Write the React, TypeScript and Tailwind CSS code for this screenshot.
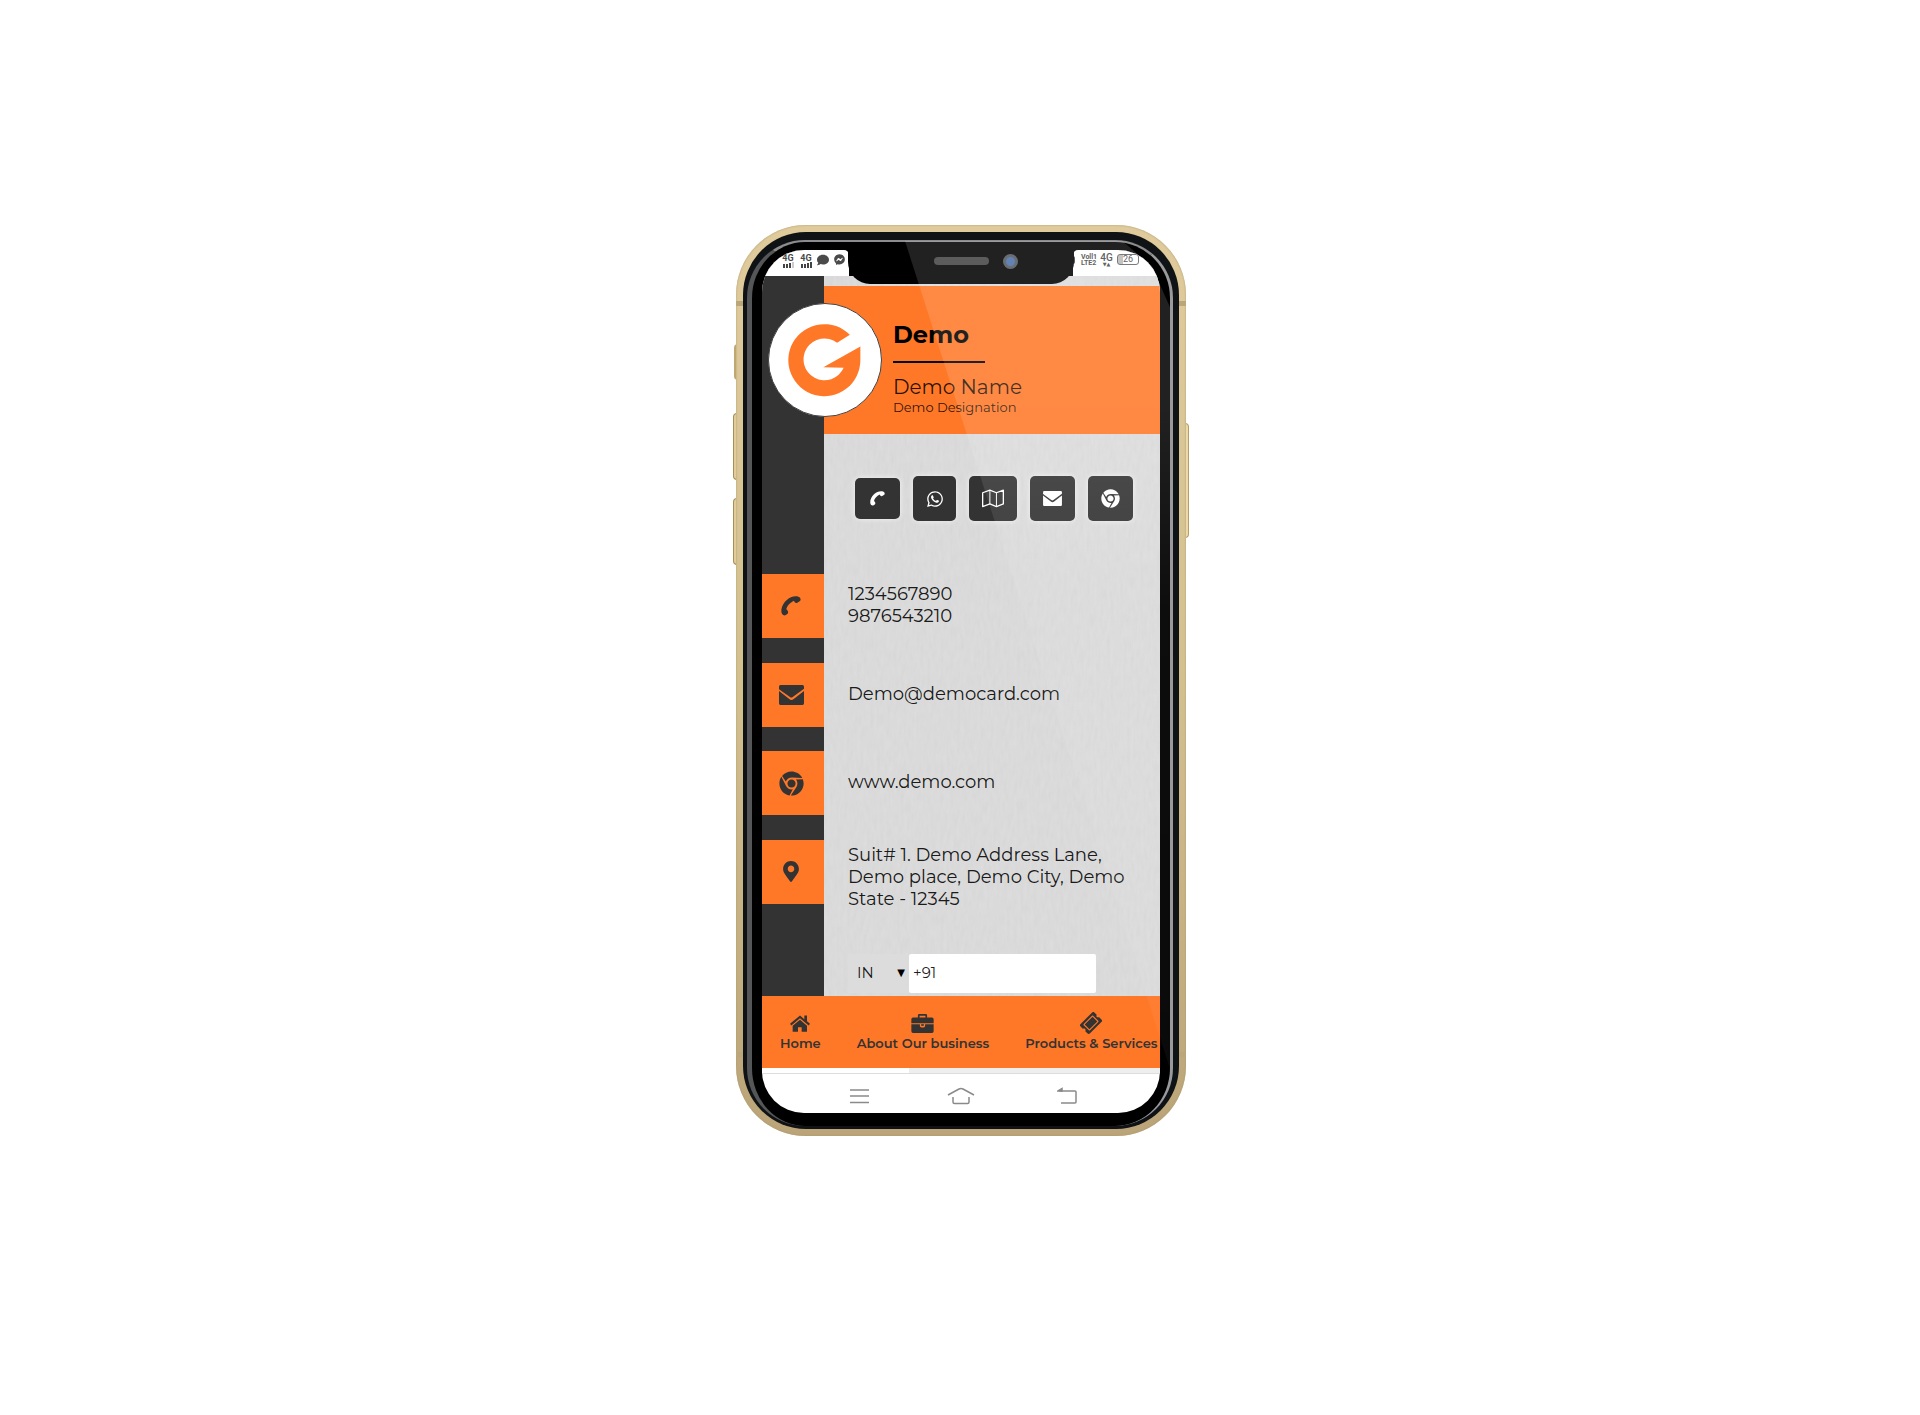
import type { ReactNode } from "react";
import { FaChrome, FaComment, FaFacebookMessenger, FaMapMarkerAlt, FaTicketAlt, FaWhatsapp } from "react-icons/fa";

type IconProps = { className?: string };

const PhoneIcon = ({ className }: IconProps) => (
  <svg viewBox="0 0 58 60" className={className} fill="currentColor" aria-hidden="true">
    <path d="M57 7C52-1 38 0 29 4 12 12 0 28 0 46c0 8 6 14 12 12l6-4c4-4 3-9-3-14 1-9 11-21 23-26 2 6 6 8 10 6l8-5q3-3 1-8Z" />
  </svg>
);

const MailIcon = ({ className }: IconProps) => (
  <svg viewBox="0 0 73 58" className={className} fill="currentColor" aria-hidden="true">
    <path d="M4 0h65q4 0 4 5v6L40 35q-4 3-8 0L0 12V5q0-5 4-5Z" />
    <path d="M0 17l30 24q6 5 13 0l30-24v36q0 5-4 5H4q-4 0-4-5Z" />
  </svg>
);

const MapIcon = ({ className }: IconProps) => (
  <svg viewBox="0 0 67 57" className={className} fill="none" stroke="currentColor" strokeWidth="4" strokeLinejoin="round" aria-hidden="true">
    <path d="M2 11 24 3l20 8 21-8v42l-21 8-20-8-22 8Z" />
    <path d="M24 3v42M44 11v42" strokeWidth="3" />
  </svg>
);

const HomeIcon = ({ className }: IconProps) => (
  <svg viewBox="0 0 60 50" className={className} fill="currentColor" aria-hidden="true">
    <path d="M30 1 0 26l4 5L30 9l26 22 4-5-9-8V1h-8v11Z" />
    <path d="M30 14 8 32v18h16V36h11v14h16V32Z" />
  </svg>
);

const BriefcaseIcon = ({ className }: IconProps) => (
  <svg viewBox="0 0 68 58" className={className} fill="currentColor" aria-hidden="true">
    <path d="M24 0h20q4 0 4 4v7h15q5 0 5 5v12H0V16q0-5 5-5h15V4q0-4 4-4Zm1 5v6h18V5Z" fillRule="evenodd" />
    <path d="M0 31h26v5q0 5 5 5h6q5 0 5-5v-5h26v22q0 5-5 5H5q-5 0-5-5Z" />
    <path d="M30 31h8v5h-8Z" />
  </svg>
);

const Logo = () => (
  <svg viewBox="0 0 342 342" className="h-full w-full" aria-label="Company logo" role="img">
    <path fill="#ff7828" d="M247 94A110 110 0 1 0 279 172V130L166 193l62 2A64 64 0 1 1 208 118Z" />
  </svg>
);

const Signal = ({ faded = false }: { faded?: boolean }) => (
  <div className="flex w-[14px] flex-col items-center">
    <span className="text-[9px] font-bold leading-[8px]">4G</span>
    <span className="flex items-end gap-px">
      <i className="h-1 w-[2px] bg-[#444]" />
      <i className="h-1 w-[2px] bg-[#444]" />
      <i className="h-[5px] w-[2px] bg-[#444]" />
      <i className={faded ? "h-[6px] w-[2px] bg-[#ccc]" : "h-[6px] w-[2px] bg-[#444]"} />
    </span>
  </div>
);

const StatusBar = () => (
  <div className="flex h-[26px] justify-between bg-black font-['Roboto',sans-serif] text-[#4a4a4a]">
    <div className="flex w-[87px] items-start justify-end gap-1 rounded-tr-[5px] bg-white pr-1 pt-1">
      <Signal faded />
      <Signal />
      <FaComment className="h-3 w-3" />
      <FaFacebookMessenger className="ml-px h-[11px] w-[11px]" />
    </div>
    <div className="flex w-[87px] items-start rounded-tl-[5px] bg-white pt-1">
      <i className="mt-0.5 h-2 w-[2px] rounded-r bg-[#444]" />
      <span className="ml-[6px] w-4 text-[7px] font-bold leading-[6px]">Voll1<br />LTE2</span>
      <span className="ml-[3px] flex w-[13px] flex-col items-center text-[10px] font-medium leading-[8px]">
        4G<small className="font-['DejaVu_Sans'] text-[5px] leading-[4px]">▼▲</small>
      </span>
      <span className="ml-1 flex h-[11px] w-[22px] items-center justify-center rounded-[3px] border border-[#666] bg-linear-to-r from-[#bbb] from-25% to-white to-25% text-[9px] leading-[9px]">
        26
      </span>
    </div>
  </div>
);

const Paper = () => (
  <svg className="pointer-events-none absolute inset-0 h-full w-full opacity-8" aria-hidden="true">
    <filter id="paper">
      <feTurbulence type="fractalNoise" baseFrequency="0.3 0.08" numOctaves="3" seed="4" />
      <feColorMatrix type="matrix" values="0.7 0 0 0 0.4 0.7 0 0 0 0.4 0.7 0 0 0 0.4 0 0 0 0 1" />
    </filter>
    <rect width="100%" height="100%" filter="url(#paper)" />
  </svg>
);

const Tile = ({ children }: { children: ReactNode }) => (
  <div className="flex h-16 items-center bg-[#ff7828] pl-4">
    <span className="flex w-[26px] justify-center">{children}</span>
  </div>
);

const Action = ({ label, size, children }: { label: string; size: string; children: ReactNode }) => (
  <a href="#" aria-label={label} className={`flex items-center justify-center rounded-[5px] bg-[#333] text-white shadow-[0_0_5px_#f4f4f4] ${size}`}>
    {children}
  </a>
);

const Detail = ({ children, tall = false }: { children: ReactNode; tall?: boolean }) => (
  <div className={tall ? "flex h-16 items-start whitespace-nowrap pt-1" : "flex h-16 items-center whitespace-nowrap pb-[2px]"}>
    <div>{children}</div>
  </div>
);

const NavItem = ({ label, children }: { label: string; children: ReactNode }) => (
  <a href="#" className="flex shrink-0 flex-col items-center whitespace-nowrap">
    <span className="flex h-5 items-center">{children}</span>
    <span className="leading-5">{label}</span>
  </a>
);

export default function App() {
  return (
    <main className="flex min-h-screen items-start justify-center bg-white pl-[2px] pt-[225px] font-['Montserrat','Inter',sans-serif] text-black">
      <div className="relative w-[450px]">
        <i className="absolute -left-0.5 top-[119px] h-9 w-1 rounded-l-sm bg-[#bfa673]" />
        <i className="absolute -left-[3px] top-[188px] h-[67px] w-1 rounded-l-sm border border-[#a68e5c] bg-[#e2cd98]" />
        <i className="absolute -left-[3px] top-[273px] h-[67px] w-1 rounded-l-sm border border-[#a68e5c] bg-[#e2cd98]" />
        <i className="absolute -right-[3px] top-[198px] h-[115px] w-1 rounded-r-sm border border-[#b89d66] bg-[#ecd9a9]" />

        <div className="relative rounded-[70px] bg-linear-to-b from-[#dfcb9b] via-[#d3c08f] to-[#baa478] p-[7px] shadow-[inset_0_0_2px_#a8946a]">
          <i className="absolute left-0 top-[76px] h-[5px] w-full bg-[#b9a67a]" />
          <i className="absolute bottom-[79px] left-0 h-[5px] w-full bg-[#b9a67a]" />
          <div className="relative overflow-hidden rounded-[63px] bg-[#101315] pb-[3px] pl-1 pr-[6px] pt-2">
            <div className="rounded-[58px] border-l-[5px] border-r-[3px] border-t-2 border-l-[#545658] border-r-[#9a999b] border-t-[#8c8c8e] bg-black pb-[13px] pl-[10px] pr-[10px] pt-2">
              <div className="relative overflow-hidden rounded-[42px] bg-white">
                <StatusBar />
                <div className="flex">
                  <aside className="w-[62px] shrink-0 bg-[#333] pt-[298px] text-[#333]">
                    <div className="flex h-[330px] flex-col justify-between">
                      <Tile><PhoneIcon className="h-5 w-5" /></Tile>
                      <Tile><MailIcon className="h-5 w-[25px]" /></Tile>
                      <Tile><FaChrome className="h-[25px] w-[25px]" /></Tile>
                      <Tile><FaMapMarkerAlt className="h-[21px] w-4" /></Tile>
                    </div>
                  </aside>
                  <section className="relative min-w-0 flex-1 bg-[#dadada] pb-[3px] pt-[10px]">
                    <Paper />
                    <header className="relative h-[148px] bg-[#ff7828] pl-[69px] pt-[34px]">
                      <div className="absolute -left-[56px] top-[17px] h-[114px] w-[114px] rounded-full border border-[#444] bg-white">
                        <Logo />
                      </div>
                      <h1 className="text-[24px] font-bold leading-[30px]">Demo</h1>
                      <hr className="mt-[11px] h-0.5 w-[92px] border-0 bg-black" />
                      <p className="mt-3 text-[20px] leading-6 text-black/85">Demo Name</p>
                      <p className="text-[13px] leading-4 text-black/85">Demo Designation</p>
                    </header>
                    <div className="relative mt-[42px] flex h-[45px] items-center gap-[13px] pl-[31px]">
                      <Action label="Call" size="h-[41px] w-[45px]"><PhoneIcon className="h-[15px] w-[15px]" /></Action>
                      <Action label="WhatsApp" size="h-[45px] w-[43px]"><FaWhatsapp className="h-[18px] w-[18px]" /></Action>
                      <Action label="Map" size="h-[45px] w-12"><MapIcon className="h-[19px] w-[22px]" /></Action>
                      <Action label="Email" size="h-[45px] w-[45px]"><MailIcon className="h-[15px] w-[19px]" /></Action>
                      <Action label="Website" size="h-[45px] w-[45px]"><FaChrome className="h-[19px] w-[19px]" /></Action>
                    </div>
                    <div className="relative mt-[53px] flex h-[330px] flex-col justify-between pl-6 text-[18px] leading-[22px] text-black/90">
                      <Detail>1234567890<br />9876543210</Detail>
                      <Detail>Demo@democard.com</Detail>
                      <Detail>www.demo.com</Detail>
                      <Detail tall>Suit# 1. Demo Address Lane,<br />Demo place, Demo City, Demo<br />State - 12345</Detail>
                    </div>
                    <form className="relative mt-[50px] flex h-[39px] pl-6 text-[15px] text-black/90">
                      <div className="relative">
                        <select aria-label="Country" defaultValue="IN" className="h-full w-[61px] appearance-none bg-[#dcdcdc] pl-[9px] outline-none">
                          <option>IN</option>
                        </select>
                        <span className="pointer-events-none absolute right-1 top-[11px] font-['DejaVu_Sans'] text-[10px] text-black">▼</span>
                      </div>
                      <input aria-label="Phone number" defaultValue="+91" className="w-[187px] rounded-[2px] bg-white pl-1 outline-none" />
                    </form>
                  </section>
                </div>
                <nav className="relative flex h-[72px] gap-9 overflow-hidden bg-[#ff7828] pl-[18px] pt-[17px] text-[13px] font-semibold text-[#333]">
                  <NavItem label="Home"><HomeIcon className="h-[17px] w-5" /></NavItem>
                  <NavItem label="About Our business"><BriefcaseIcon className="h-[19px] w-[23px]" /></NavItem>
                  <NavItem label="Products & Services"><FaTicketAlt className="h-5 w-5 -rotate-45" /></NavItem>
                </nav>
                <div className="h-[6px] border-b border-[#ddd] bg-linear-to-r from-white from-37% to-[#eee] to-37%" />
                <div className="flex h-[39px] items-center pl-[88px] pt-[5px] text-[#8a8a8a]">
                  <button aria-label="Recent apps">
                    <svg viewBox="0 0 20 16" className="h-4 w-5" fill="none" stroke="currentColor" strokeWidth="1.5"><path d="M0 2h19M0 8h19M0 14.500h19" /></svg>
                  </button>
                  <button aria-label="Go home" className="ml-[77px]">
                    <svg viewBox="0 0 28 18" className="h-[18px] w-7" fill="none" stroke="currentColor" strokeWidth="1.5"><path d="M1 8 12 2q2-1 4 0l11 6M6 10v5q0 1.500 1.500 1.500h13q1.500 0 1.500-1.500v-5" /></svg>
                  </button>
                  <button aria-label="Back" className="ml-[82px]">
                    <svg viewBox="0 0 20 18" className="h-[18px] w-5" fill="none" stroke="currentColor" strokeWidth="1.5"><path d="M2 4h16q1 0 1 1v10q0 1-1 1H4" /><path d="M1 4l4-2.500V4Z" fill="currentColor" /></svg>
                  </button>
                </div>

                <div className="absolute left-[86px] top-0 h-[34px] w-[226px] rounded-b-[22px] bg-black">
                  <i className="absolute left-[86px] top-[7px] h-2 w-[55px] rounded-full bg-[#444]" />
                  <i className="absolute left-[155px] top-[4px] h-[15px] w-[15px] rounded-full border-[3px] border-[#53585f] bg-[#4b70a8]" />
                </div>
              </div>
            </div>
            <div className="pointer-events-none absolute bottom-[60px] left-[162px] right-[9px] top-[9px] bg-linear-to-b from-white/13 from-20% via-white/5 via-45% to-white/4 [clip-path:polygon(0_0,82%_0,93%_3%,100%_8%,100%_100%)]" />
          </div>
        </div>
      </div>
    </main>
  );
}
